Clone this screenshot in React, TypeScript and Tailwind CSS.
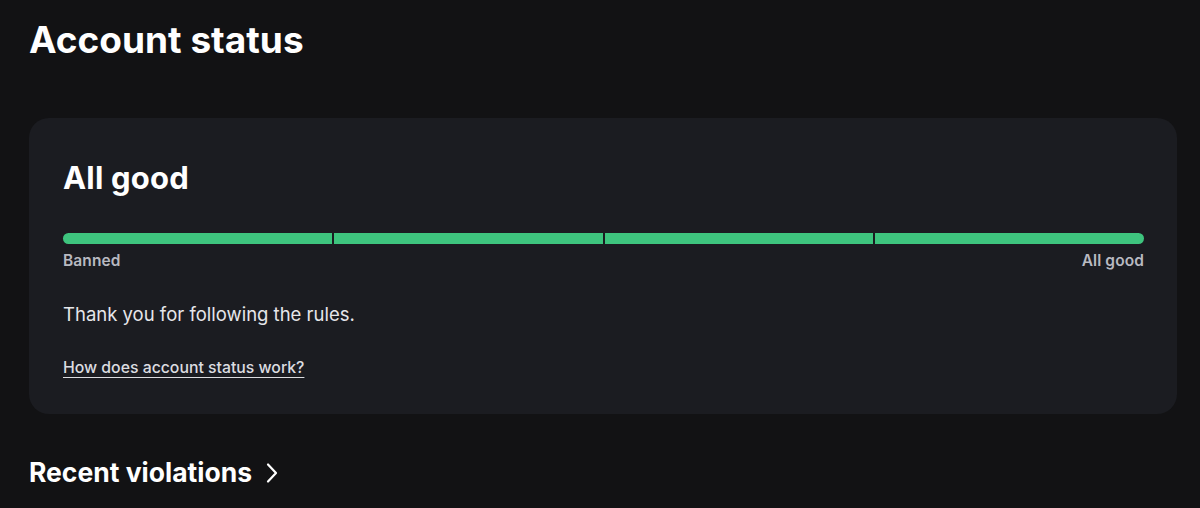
const segments = [0, 1, 2, 3];

const App = () => {
  return (
    <div
      className="h-[508px] w-[1200px] overflow-hidden bg-[#121214] pl-[29px] pr-[23px] text-white"
      style={{ fontFamily: "Inter, 'Liberation Sans', sans-serif" }}
    >
      <h1 className="pt-[18px] text-[37px] font-bold leading-[44px]">Account status</h1>

      <div className="mt-[56px] rounded-[20px] bg-[#1b1c21] pb-[35px] pl-[34px] pr-[33px] pt-[41px]">
        <h2 className="text-[31px] font-bold leading-[38px] tracking-[0.2px]">All good</h2>

        <div className="mt-[36px] flex h-[11px] gap-[2px]">
          {segments.map((i) => (
            <div
              key={i}
              className={`flex-1 bg-[#3ec47e] ${i === 0 ? "rounded-l-full" : ""} ${
                i === 3 ? "rounded-r-full" : ""
              }`}
            />
          ))}
        </div>
        <div className="mt-[7px] flex justify-between text-[15.5px] font-semibold leading-[20px] tracking-[0.1px] text-[#b8b9c0]">
          <span>Banned</span>
          <span>All good</span>
        </div>

        <p className="mt-[30px] text-[18.5px] leading-[26px] text-[#e6e6ea]">Thank you for following the rules.</p>

        <a
          href="#"
          className="mt-[30px] inline-block text-[15.8px] font-medium leading-[22px] text-[#dcdce0] underline underline-offset-[4px]"
        >
          How does account status work?
        </a>
      </div>

      <div className="mt-[41px] flex items-center gap-[13px]">
        <h3 className="text-[26.5px] font-bold leading-[34px]">Recent violations</h3>
        <svg width="14" height="22" viewBox="0 0 14 22" fill="none" className="mt-[1px]">
          <path d="M3 2.5 L11 11 L3 19.5" stroke="white" strokeWidth="2.2" strokeLinecap="round" strokeLinejoin="round" />
        </svg>
      </div>
    </div>
  );
};

export default App;
